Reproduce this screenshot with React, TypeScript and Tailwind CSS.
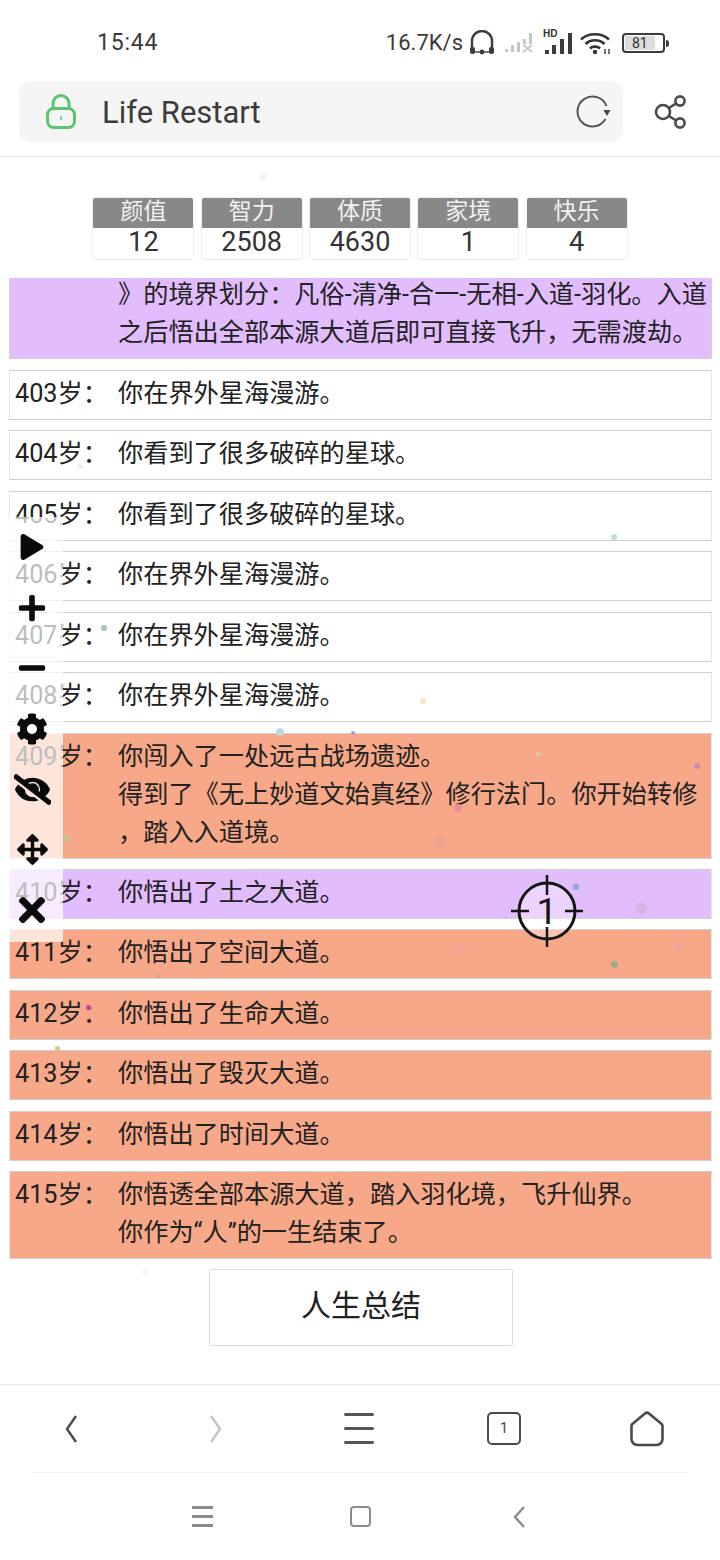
import { FaArrowsAlt, FaCog, FaEyeSlash, FaMinus, FaPlay, FaPlus, FaTimes } from "react-icons/fa";

const FONT = "font-['Roboto','Noto_Sans_CJK_SC',sans-serif]";

const stats = [
  { label: "颜值", value: "12" },
  { label: "智力", value: "2508" },
  { label: "体质", value: "4630" },
  { label: "家境", value: "1" },
  { label: "快乐", value: "4" },
];

const PURPLE = "bg-[#e2bdfe]";
const ORANGE = "bg-[#f7a888]";
const WHITE = "bg-white";

const rows = [
  { age: "403", bg: WHITE, lines: ["你在界外星海漫游。"] },
  { age: "404", bg: WHITE, lines: ["你看到了很多破碎的星球。"] },
  { age: "405", bg: WHITE, lines: ["你看到了很多破碎的星球。"] },
  { age: "406", bg: WHITE, lines: ["你在界外星海漫游。"] },
  { age: "407", bg: WHITE, lines: ["你在界外星海漫游。"] },
  { age: "408", bg: WHITE, lines: ["你在界外星海漫游。"] },
  {
    age: "409",
    bg: ORANGE,
    lines: ["你闯入了一处远古战场遗迹。", "得到了《无上妙道文始真经》修行法门。你开始转修", "，踏入入道境。"],
  },
  { age: "410", bg: PURPLE, lines: ["你悟出了土之大道。"] },
  { age: "411", bg: ORANGE, lines: ["你悟出了空间大道。"] },
  { age: "412", bg: ORANGE, lines: ["你悟出了生命大道。"] },
  { age: "413", bg: ORANGE, lines: ["你悟出了毁灭大道。"] },
  { age: "414", bg: ORANGE, lines: ["你悟出了时间大道。"] },
  { age: "415", bg: ORANGE, lines: ["你悟透全部本源大道，踏入羽化境，飞升仙界。", "你作为“人”的一生结束了。"] },
];

const tools = [
  { Icon: FaPlay, size: 26, bold: 0 },
  { Icon: FaPlus, size: 30, bold: 0 },
  { Icon: FaMinus, size: 30, bold: 0 },
  { Icon: FaCog, size: 32, bold: 0 },
  { Icon: FaEyeSlash, size: 37, bold: 24 },
  { Icon: FaArrowsAlt, size: 31, bold: 0 },
  { Icon: FaTimes, size: 38, bold: 0 },
];

// falling particles, their place on the page is the content
const dots = [
  { x: 263, y: 177, s: 8, c: "#f4f5f4" },
  { x: 80, y: 466, s: 5, c: "#e6f0e6" },
  { x: 614, y: 537, s: 6, c: "#bfe3c3" },
  { x: 104, y: 628, s: 6, c: "#a9c4bb" },
  { x: 423, y: 701, s: 6, c: "#fbe3c8" },
  { x: 280, y: 732, s: 8, c: "#c4d7e0" },
  { x: 353, y: 733, s: 4, c: "#a89ad8" },
  { x: 697, y: 766, s: 6, c: "#d08bb0" },
  { x: 538, y: 754, s: 4, c: "#c9d3b0" },
  { x: 458, y: 808, s: 8, c: "#ee8d99" },
  { x: 440, y: 842, s: 12, c: "#eba48e" },
  { x: 67, y: 838, s: 6, c: "#bcc98a" },
  { x: 576, y: 887, s: 6, c: "#8fa6dc" },
  { x: 641, y: 908, s: 12, c: "#d2b6e8" },
  { x: 614, y: 964, s: 7, c: "#a3a982" },
  { x: 678, y: 946, s: 7, c: "#eda2a0" },
  { x: 459, y: 949, s: 5, c: "#e5a7a8" },
  { x: 88, y: 1007, s: 5, c: "#c6439a" },
  { x: 158, y: 976, s: 4, c: "#d6a878" },
  { x: 57, y: 1048, s: 5, c: "#d3c88a" },
  { x: 553, y: 1115, s: 5, c: "#efa48c" },
  { x: 145, y: 1272, s: 6, c: "#f8f8ee" },
];

function Lock() {
  return (
    <svg width="32" height="36" viewBox="0 0 32 36" fill="none" stroke="#5cc56f" strokeWidth="3">
      <path d="M8 15V9.5a8 8 0 0 1 16 0V15" />
      <rect x="2.5" y="14.5" width="27" height="19" rx="6" />
      <path d="M16 22v4" strokeWidth="1.5" />
    </svg>
  );
}

function Reload() {
  return (
    <svg width="36" height="34" viewBox="0 0 36 34" fill="none">
      <path d="M29.500 24A15 15 0 1 1 30.500 11" stroke="#555" strokeWidth="2" />
      <path d="M27.500 15h7l-3.500 6z" fill="#444" />
    </svg>
  );
}

function Share() {
  return (
    <svg width="34" height="36" viewBox="0 0 34 36" fill="none" stroke="#4a4a4a" strokeWidth="2.6">
      <circle cx="9" cy="18" r="7" />
      <circle cx="26" cy="7" r="4.6" />
      <circle cx="26" cy="29" r="4.6" />
      <path d="M15 14l7-4.5M15 22l7 4.5" />
    </svg>
  );
}

function StatusIcons() {
  return (
    <div className="flex items-center">
      <svg width="26" height="26" viewBox="0 0 26 26" fill="none" className="ml-[6px]">
        <path d="M3 20v-9a10 10 0 0 1 20 0v9" stroke="#3c3c3c" strokeWidth="2.4" />
        <rect x="1" y="17" width="5" height="7" rx="2" fill="#3c3c3c" />
        <rect x="20" y="17" width="5" height="7" rx="2" fill="#3c3c3c" />
        <path d="M6 22h14" stroke="#3c3c3c" strokeWidth="1.4" />
        <circle cx="13" cy="22" r="2.4" fill="#3c3c3c" />
      </svg>
      <svg width="32" height="24" viewBox="0 0 32 24" className="ml-[9px]" fill="#c4c4c4">
        <rect x="1" y="18" width="3" height="3" />
        <rect x="7" y="14" width="3" height="7" />
        <rect x="13" y="11" width="3" height="10" />
        <rect x="19" y="8" width="3" height="5" />
        <rect x="25" y="2" width="3" height="11" />
        <path d="M19 14l9 7M28 14l-9 7" stroke="#c4c4c4" strokeWidth="1.6" />
      </svg>
      <div className="relative ml-[7px] h-[26px] w-[34px]">
        <span className="absolute left-0 top-[-2px] font-['Liberation_Sans',sans-serif] text-[10px] font-bold leading-[12px] text-[#333]">
          HD
        </span>
        <svg width="34" height="26" viewBox="0 0 34 26" fill="#3c3c3c">
          <rect x="2" y="20" width="4" height="4" />
          <rect x="9" y="15" width="4" height="9" />
          <rect x="17" y="9" width="4" height="15" />
          <rect x="25" y="3" width="4" height="21" />
        </svg>
      </div>
      <svg width="32" height="24" viewBox="0 0 32 24" className="ml-[2px]" fill="none" stroke="#333" strokeWidth="2.6">
        <path d="M2 8.5C9 1.5 23 1.5 30 8.5" />
        <path d="M6.5 13C11.5 8 20.5 8 25.5 13" />
        <path d="M11 17.5C13.5 15 18.5 15 21 17.5" />
        <circle cx="16" cy="21" r="2.2" fill="#333" stroke="none" />
        <path d="M26 18v5M30 18v5" strokeWidth="1.4" />
      </svg>
      <div className="ml-[11px] flex items-center">
        <div className="flex h-[20px] w-[43px] items-center rounded-[4px] border-2 border-[#3c3c3c] p-[1px]">
          <div className="flex h-full w-[80%] items-center justify-center bg-[#dcdcdc] text-[14px] leading-none text-[#333]">81</div>
        </div>
        <div className="ml-[1px] h-[7px] w-[3px] rounded-r-sm bg-[#3c3c3c]" />
      </div>
    </div>
  );
}

function Crosshair() {
  return (
    <div className="absolute left-[510px] top-[874px] flex h-[74px] w-[74px] items-center justify-center">
      <svg width="74" height="74" viewBox="0 0 74 74" fill="none" stroke="#151515" className="absolute inset-0">
        <circle cx="37" cy="37" r="28" strokeWidth="3" fill="rgba(255,255,255,0.35)" />
        <path d="M37 1v20M37 53v20M1 37h18M55 37h18" strokeWidth="2.5" />
      </svg>
      <span className="relative text-[37px] leading-none text-[#151515]">1</span>
    </div>
  );
}

function BottomNav() {
  return (
    <div className="mt-auto">
      <div className="flex h-[88px] items-center border-t border-[#e8e8e8]">
        <div className="flex w-[144px] justify-center">
          <svg width="16" height="32" viewBox="0 0 16 32" fill="none" stroke="#4a4a4a" strokeWidth="2.4">
            <path d="M12 3L3 16l9 13" />
          </svg>
        </div>
        <div className="flex w-[142px] justify-center">
          <svg width="16" height="32" viewBox="0 0 16 32" fill="none" stroke="#c4c4c4" strokeWidth="2.4">
            <path d="M4 3l9 13-9 13" />
          </svg>
        </div>
        <div className="flex w-[146px] flex-col items-center gap-[11px]">
          <div className="h-[3px] w-[30px] rounded bg-[#555]" />
          <div className="h-[3px] w-[30px] rounded bg-[#555]" />
          <div className="h-[3px] w-[30px] rounded bg-[#555]" />
        </div>
        <div className="flex w-[144px] justify-center">
          <div className="flex h-[33px] w-[34px] items-center justify-center rounded-[5px] border-[2.5px] border-[#4a4a4a] text-[15px] leading-none text-[#4a4a4a]">
            1
          </div>
        </div>
        <div className="flex w-[144px] justify-center pr-[2px]">
          <svg width="38" height="36" viewBox="0 0 36 36" fill="none" stroke="#4a4a4a" strokeWidth="2.6">
            <path d="M16 2.500a3 3 0 0 1 4 0l12 10a3 3 0 0 1 1.500 3V28a6 6 0 0 1-6 6H8.500a6 6 0 0 1-6-6V15.500a3 3 0 0 1 1.500-3z" />
          </svg>
        </div>
      </div>
      <div className="mx-[32px] border-t border-[#f2f2f2]" />
      <div className="flex h-[87px] items-center justify-center pr-[2px]">
        <div className="flex w-[21px] flex-col gap-[6px]">
          <div className="h-[3px] bg-[#8c8c8c]" />
          <div className="h-[3px] bg-[#8c8c8c]" />
          <div className="h-[3px] bg-[#8c8c8c]" />
        </div>
        <div className="ml-[137px] mr-[141px] h-[21px] w-[21px] rounded-[4px] border-[2.5px] border-[#8c8c8c]" />
        <svg width="14" height="24" viewBox="0 0 14 24" fill="none" stroke="#8c8c8c" strokeWidth="2.4">
          <path d="M12 2L3 12l9 10" />
        </svg>
      </div>
    </div>
  );
}

export default function App() {
  return (
    <div className={`relative flex h-[1560px] w-[720px] flex-col overflow-hidden bg-white ${FONT}`}>
      <div className="flex h-[81px] items-start justify-between pl-[97px] pr-[51px] pt-[28px] text-[#3a3a3a]">
        <span className="text-[23px] leading-[30px] tracking-[0.8px]">15:44</span>
        <div className="flex h-[30px] items-center">
          <span className="text-[22px] leading-[30px]">16.7K/s</span>
          <StatusIcons />
        </div>
      </div>

      <header className="flex h-[76px] items-start border-b border-[#ececec] pl-[19px]">
        <div className="flex h-[61px] w-[604px] items-center rounded-[12px] bg-[#f5f5f5] pl-[26px] pr-[11px]">
          <Lock />
          <span className="ml-[25px] flex-1 pt-[2px] text-[31px] leading-none text-[#3c3c3c]">Life Restart</span>
          <Reload />
        </div>
        <div className="ml-[31px] mt-[13px]">
          <Share />
        </div>
      </header>

      <div className="mt-[40px] flex justify-center gap-[6.300px]">
        {stats.map((s) => (
          <div key={s.label} className="w-[102px] overflow-hidden rounded-[3px] border border-[#eee] text-center">
            <div className="-mx-px -mt-px h-[31px] bg-[#888] text-[23px] leading-[29px] text-[#f1f1f1]">{s.label}</div>
            <div className="h-[31px] bg-white text-[27px] leading-[29px] text-[#333]">{s.value}</div>
          </div>
        ))}
      </div>

      <div className="ml-[9px] mr-[8px] mt-[18px] flex h-[981px] flex-col overflow-hidden rounded-[2px] text-[25.200px] leading-[38px] text-[#222]">
        <div className={`${PURPLE} -mt-[6.600px] shrink-0 border border-[#d5cfdb] pb-[6px] pl-[108px] pt-[4px] whitespace-nowrap`}>
          <div>》的境界划分：凡俗-清净-合一-无相-入道-羽化。入道</div>
          <div>之后悟出全部本源大道后即可直接飞升，无需渡劫。</div>
        </div>
        {rows.map((r) => (
          <div
            key={r.age}
            className={`${r.bg} mt-[10.460px] flex shrink-0 border border-x-[#e6e6e6] border-y-[#cfcfcf] pb-[6px] pl-[5px] pt-[4px]`}
          >
            <div className="w-[103px] shrink-0">{r.age}岁：</div>
            <div className="whitespace-nowrap">
              {r.lines.map((line) => (
                <div key={line}>{line}</div>
              ))}
            </div>
          </div>
        ))}
      </div>

      <button className="ml-[209px] mt-[10px] h-[77px] w-[304px] rounded-[2px] border border-[#ddd] bg-white pb-[5px] text-[30px] text-[#222]">
        人生总结
      </button>

      <BottomNav />

      {dots.map((d) => (
        <div
          key={`${d.x}-${d.y}`}
          className="absolute rounded-full"
          style={{ left: d.x - d.s / 2, top: d.y - d.s / 2, width: d.s, height: d.s, backgroundColor: d.c }}
        />
      ))}

      <div className="absolute left-[9px] top-[517px] flex h-[425px] w-[54px] flex-col items-center bg-white/70 pr-[8px] pt-[30px] text-[#0a0a0a]">
        {tools.map(({ Icon, size, bold }, i) => (
          <div key={i} className="flex h-[60.500px] w-full shrink-0 items-start justify-center">
            <Icon size={size} stroke="currentColor" strokeWidth={bold} style={{ marginTop: -size / 2 }} className="shrink-0" />
          </div>
        ))}
      </div>

      <Crosshair />
    </div>
  );
}
